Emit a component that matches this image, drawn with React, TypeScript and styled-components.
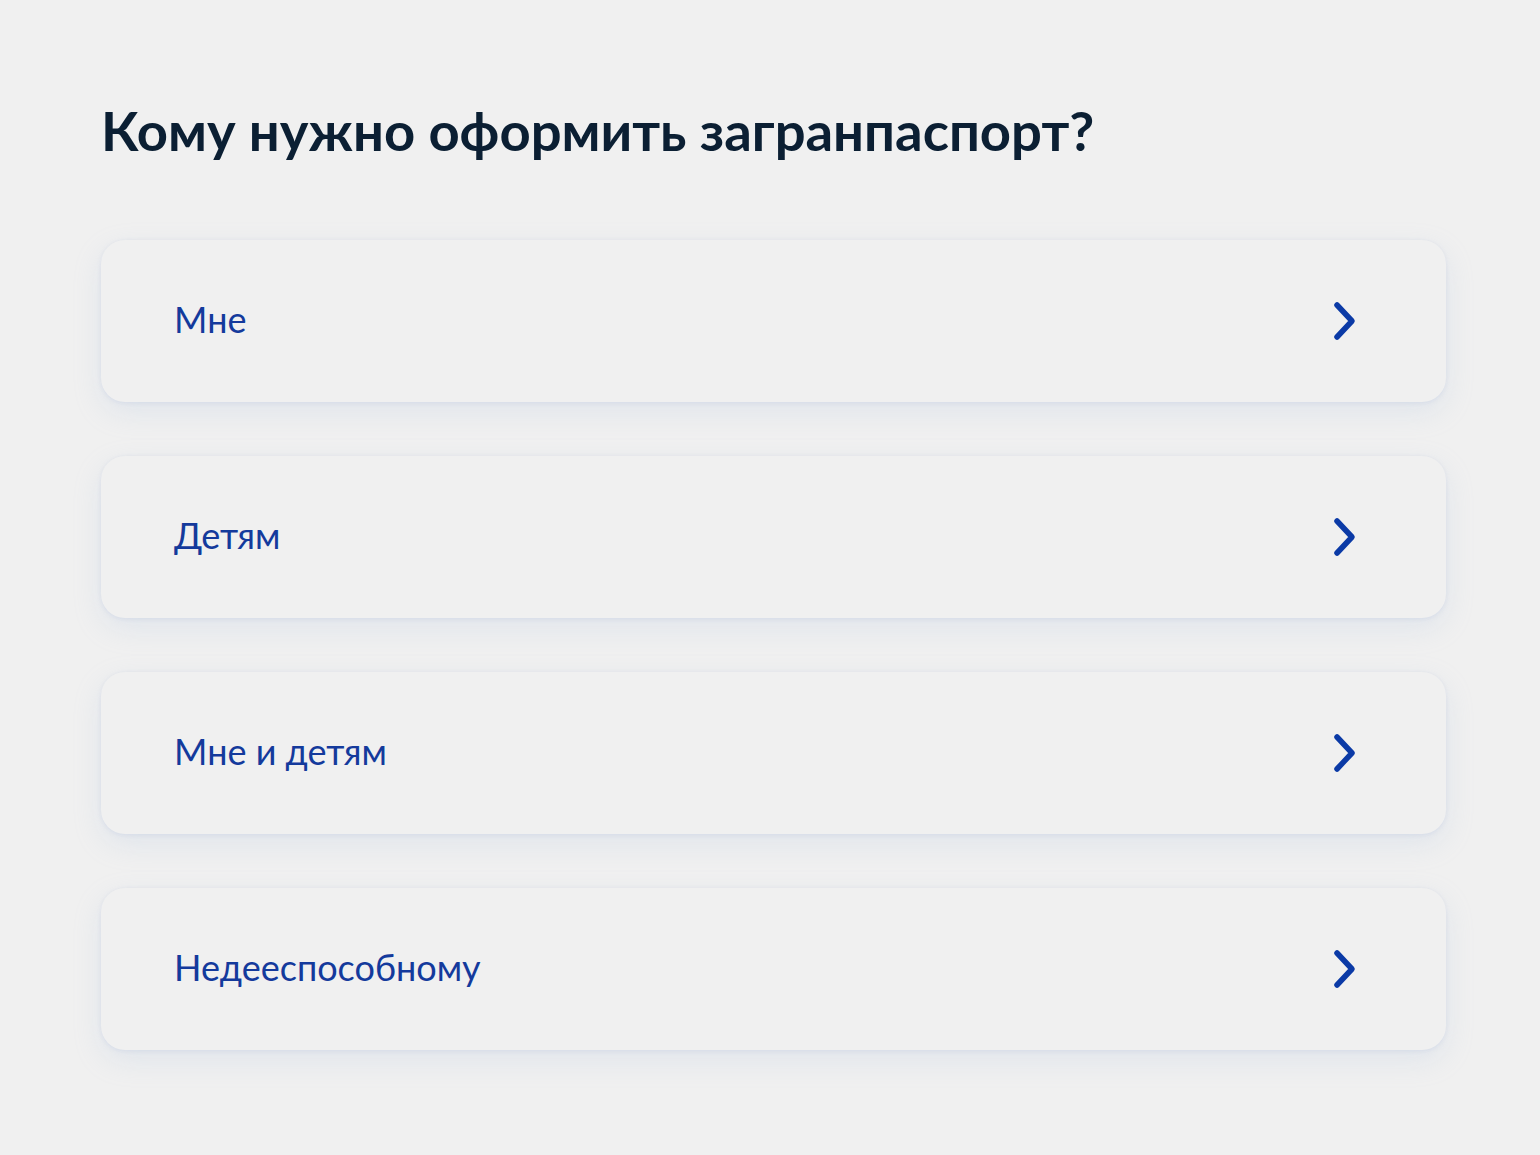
import styled, { createGlobalStyle } from 'styled-components'

const Global = createGlobalStyle`
  body {
    margin: 0;
    background: #f0f0f0;
    font-family: Lato, "Noto Sans", sans-serif;
  }
`

const Page = styled.main`
  padding: 92px 94px 80px 101px;
`

const Title = styled.h1`
  margin: 0 0 72px;
  font-size: 54.4px;
  line-height: 76px;
  font-weight: 700;
  color: #0b1f33;
`

const List = styled.div`
  display: flex;
  flex-direction: column;
  gap: 54px;
`

const Card = styled.a`
  display: flex;
  align-items: center;
  justify-content: space-between;
  height: 162px;
  box-sizing: border-box;
  padding: 0 88px 0 73px;
  border-radius: 24px;
  background: #f0f0f0;
  box-shadow: 0 10px 28px rgba(170, 190, 225, 0.22), 0 1px 4px rgba(160, 175, 215, 0.22);
  text-decoration: none;
  cursor: pointer;
`

const Label = styled.span`
  font-size: 36px;
  color: #143a9c;
  margin-bottom: 4px;
`

function Chevron() {
  return (
    <svg width="26" height="40" viewBox="0 0 26 40" fill="none">
      <path d="M5 4 L20 20 L5 36" stroke="#0b3aa6" strokeWidth="5.5" strokeLinecap="round" strokeLinejoin="round" />
    </svg>
  )
}

const items = ['Мне', 'Детям', 'Мне и детям', 'Недееспособному']

export default function App() {
  return (
    <Page>
      <Global />
      <Title>Кому нужно оформить загранпаспорт?</Title>
      <List>
        {items.map((t) => (
          <Card key={t}>
            <Label>{t}</Label>
            <Chevron />
          </Card>
        ))}
      </List>
    </Page>
  )
}
